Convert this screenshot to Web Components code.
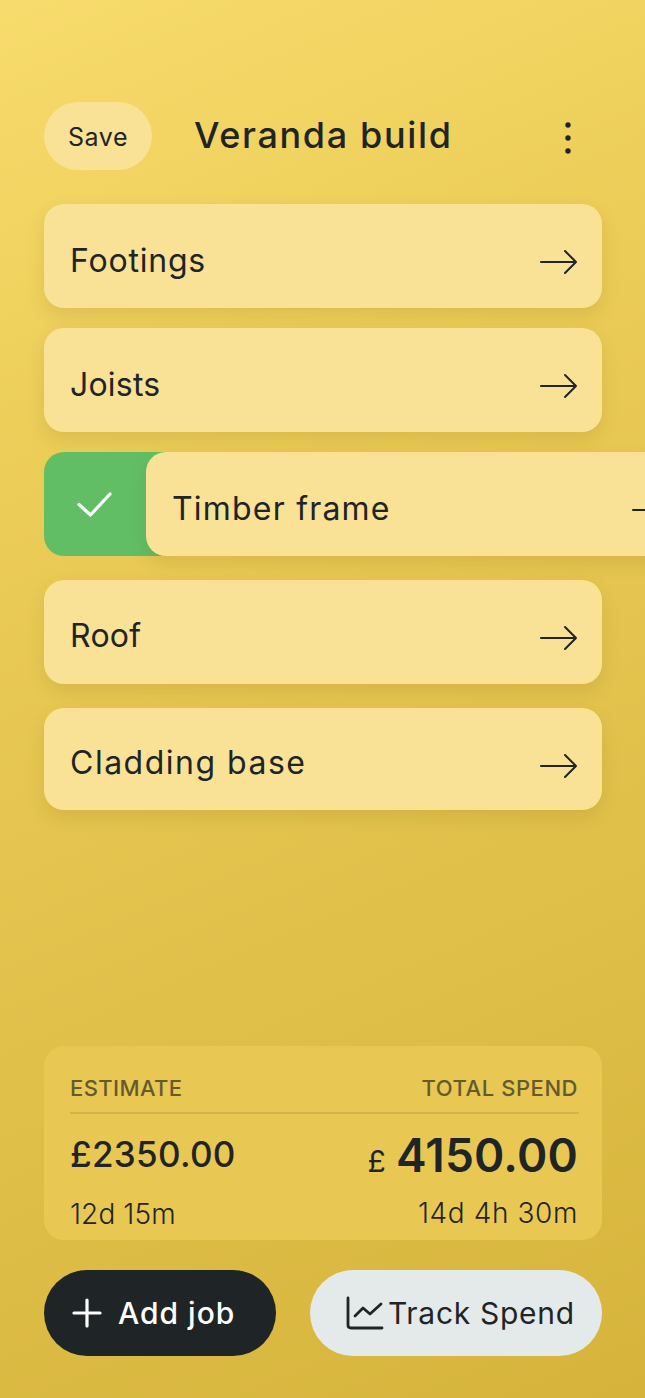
<!DOCTYPE html>
<html lang="en">
<head>
<meta charset="utf-8">
<title>Veranda build</title>
<style>
  html, body { margin: 0; padding: 0; height: 100%; overflow: hidden; }
  body { font-family: "Inter", "Liberation Sans", sans-serif; color: #1f2526; }
</style>
</head>
<body>
<job-app>
  <job-header slot="header" title="Veranda build"></job-header>
  <job-item style="--ls:.8px">Footings</job-item>
  <job-item style="--ls:.2px">Joists</job-item>
  <job-item done style="--ls:1.2px">Timber frame</job-item>
  <job-item style="margin-top:4px;--ls:.25px;--text-shift:6px;--arrow-shift:6px">Roof</job-item>
  <job-item style="margin-top:4px;--item-h:102px;--ls:1.5px;--text-shift:6px;--arrow-shift:8px">Cladding base</job-item>
  <job-summary slot="summary"></job-summary>
  <job-actions slot="actions"></job-actions>
</job-app>

<script>
class JobApp extends HTMLElement {
  connectedCallback() {
    this.attachShadow({ mode: 'open' });
    this.shadowRoot.innerHTML = `
      <style>
        :host {
          display: flex;
          flex-direction: column;
          box-sizing: border-box;
          width: 645px;
          height: 1398px;
          padding: 102px 43px 42px 44px;
          overflow: hidden;
          background: linear-gradient(157deg, #f7db6c 0%, #eccd58 28%, #d6b43c 100%);
        }
        .list {
          display: flex;
          flex-direction: column;
          gap: 20px;
          margin-top: 34px;
          flex: 1;
        }
      </style>
      <slot name="header"></slot>
      <div class="list"><slot></slot></div>
      <slot name="summary"></slot>
      <slot name="actions"></slot>
    `;
  }
}

class JobHeader extends HTMLElement {
  connectedCallback() {
    this.attachShadow({ mode: 'open' });
    this.shadowRoot.innerHTML = `
      <style>
        :host {
          display: flex;
          align-items: center;
          height: 68px;
        }
        .save {
          box-sizing: border-box;
          width: 108px;
          height: 68px;
          padding-top: 2px;
          border-radius: 34px;
          background: #f9e295;
          display: flex;
          align-items: center;
          justify-content: center;
          font-size: 25px;
          letter-spacing: 0.6px;
        }
        h1 {
          margin: 0 0 2px 42px;
          font-size: 36px;
          font-weight: 500;
          letter-spacing: 1.65px;
          flex: 1;
        }
        svg { display: block; margin-right: 22px; }
      </style>
      <div class="save">Save</div>
      <h1>${this.getAttribute('title')}</h1>
      <svg width="24" height="36" viewBox="0 0 24 36" fill="#1f2526">
        <circle cx="12" cy="7" r="2.7"/><circle cx="12" cy="20" r="2.7"/><circle cx="12" cy="33" r="2.7"/>
      </svg>
    `;
  }
}

class JobItem extends HTMLElement {
  connectedCallback() {
    const done = this.hasAttribute('done');
    this.attachShadow({ mode: 'open' });
    this.shadowRoot.innerHTML = `
      <style>
        :host {
          display: block;
          position: relative;
          height: var(--item-h, 104px);
          flex: none;
        }
        .under {
          position: absolute;
          left: 0; top: 0; bottom: 0;
          width: 140px;
          border-radius: 20px;
          background: #62be65;
        }
        .under svg { position: absolute; left: 31px; top: 39px; }
        .card {
          box-sizing: border-box;
          position: relative;
          height: 100%;
          padding: var(--text-shift, 8px) ${done ? 34 : 24}px 0 26px;
          display: flex;
          align-items: center;
          justify-content: space-between;
          border-radius: 20px;
          background: #f9e295;
          box-shadow: 0 8px 18px rgba(90, 70, 0, 0.12);
          font-size: 32px;
          letter-spacing: var(--ls, 0.5px);
          transform: translateX(${done ? 102 : 0}px);
        }
        .card svg { margin-top: var(--arrow-shift, 4px); flex: none; }
      </style>
      ${done ? `<div class="under">
        <svg width="39" height="27" viewBox="0 0 39 27" fill="none" stroke="#fff" stroke-width="3.2" stroke-linecap="round" stroke-linejoin="round"><path d="M4 13.5 L15.5 24 L35 3"/></svg>
      </div>` : ''}
      <div class="card">
        <slot></slot>
        <svg width="38" height="26" viewBox="0 0 38 26" fill="none" stroke="#1f2526" stroke-width="2" stroke-linecap="round" stroke-linejoin="round"><path d="M1 13 H36 M25 2 L36 13 L25 24"/></svg>
      </div>
    `;
  }
}

class JobSummary extends HTMLElement {
  connectedCallback() {
    this.attachShadow({ mode: 'open' });
    this.shadowRoot.innerHTML = `
      <style>
        :host {
          display: block;
          box-sizing: border-box;
          height: 194px;
          padding: 28px 23px 0 26px;
          border-radius: 20px;
          background: #e8c853;
        }
        .row { display: flex; justify-content: space-between; }
        .labels {
          height: 38px;
          border-bottom: 2px solid #d3b44a;
          font-size: 22px;
          font-weight: 500;
          letter-spacing: 0.4px;
          color: #645a2e;
          line-height: 28px;
        }
        .labels span:last-child { letter-spacing: 0.55px; margin-right: 1px; }
        .money {
          margin-top: 10px;
          height: 60px;
          align-items: center;
          font-weight: 500;
          line-height: 60px;
          padding-right: 1px;
        }
        .est { font-size: 35px; letter-spacing: 0.3px; }
        .spend { padding-top: 13px; }
        .pound { font-size: 30px; font-weight: 400; margin-right: 10px; }
        .total { font-size: 46px; font-weight: 600; letter-spacing: 0.2px; }
        .times {
          margin-top: 12px;
          padding-right: 1px;
          font-size: 28px;
          font-weight: 300;
          line-height: 34px;
        }
        .times .left { letter-spacing: 0.1px; margin-top: 1px; }
        .times .right { letter-spacing: 0.6px; }
      </style>
      <div class="row labels"><span>ESTIMATE</span><span>TOTAL SPEND</span></div>
      <div class="row money">
        <span class="est">£2350.00</span>
        <span class="spend"><span class="pound">£</span><span class="total">4150.00</span></span>
      </div>
      <div class="row times"><span class="left">12d 15m</span><span class="right">14d 4h 30m</span></div>
    `;
  }
}

class JobActions extends HTMLElement {
  connectedCallback() {
    this.attachShadow({ mode: 'open' });
    this.shadowRoot.innerHTML = `
      <style>
        :host {
          display: flex;
          justify-content: space-between;
          margin-top: 30px;
          height: 86px;
        }
        .btn {
          box-sizing: border-box;
          height: 86px;
          border-radius: 43px;
          display: flex;
          align-items: center;
          font-size: 30px;
          letter-spacing: 0.7px;
          font-weight: 500;
        }
        .add { width: 232px; background: #1f2526; color: #fff; padding-left: 28px; gap: 16px; letter-spacing: 1px; }
        .track { width: 292px; background: #e4eaea; color: #1f2526; padding-left: 36px; gap: 4px; font-weight: 400; }
        svg { display: block; flex: none; }
      </style>
      <div class="btn add">
        <svg width="30" height="30" viewBox="0 0 30 30" fill="none" stroke="#fff" stroke-width="3.2" stroke-linecap="round"><path d="M15 2 V28 M2 15 H28"/></svg>
        <span>Add job</span>
      </div>
      <div class="btn track">
        <svg width="38" height="34" viewBox="0 0 38 34" fill="none" stroke="#1f2526" stroke-width="2.8" stroke-linecap="round" stroke-linejoin="round"><path d="M2 2 V29 Q2 32 5 32 H36 M9 20 L17 12 L24 18 L35 8"/></svg>
        <span>Track Spend</span>
      </div>
    `;
  }
}

customElements.define('job-app', JobApp);
customElements.define('job-header', JobHeader);
customElements.define('job-item', JobItem);
customElements.define('job-summary', JobSummary);
customElements.define('job-actions', JobActions);
</script>
</body>
</html>
